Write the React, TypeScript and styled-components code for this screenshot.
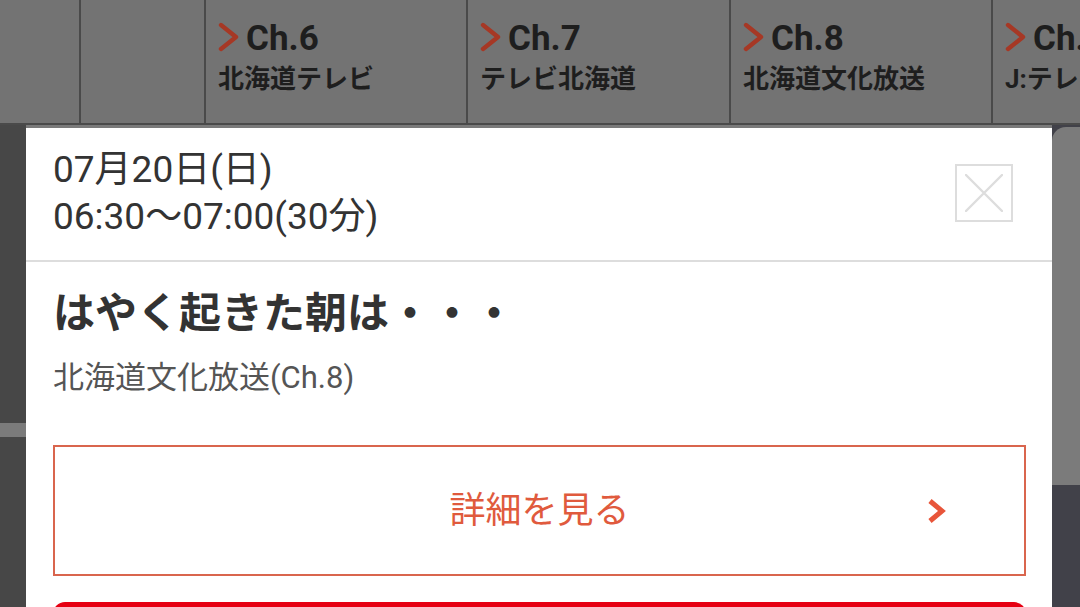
import React from "react";
import styled, { createGlobalStyle } from "styled-components";

const Global = createGlobalStyle`
  html, body {
    margin: 0;
    padding: 0;
    width: 1080px;
    height: 607px;
    overflow: hidden;
    background: #474747;
  }
  body {
    font-family: Roboto, "Noto Sans CJK JP", sans-serif;
  }
`;

const Page = styled.div`
  position: relative;
  width: 1080px;
  height: 607px;
  overflow: hidden;
  background: #474747;
  display: flex;
  flex-direction: column;
`;

const ChannelHeader = styled.div`
  display: flex;
  height: 123px;
  flex: none;
  background: #737373;
  border-bottom: 2px solid #4a4a4a;
`;

const HeaderCell = styled.div<{ $w: number }>`
  width: ${(p) => p.$w}px;
  flex: none;
  box-sizing: border-box;
  border-right: 2px solid #4a4a4a;
  padding: 20px 0 0 12px;
  overflow: hidden;
  white-space: nowrap;
`;

const ChRow = styled.div`
  display: flex;
  align-items: center;
  gap: 6px;
  height: 34px;
`;

const ChLabel = styled.span`
  font-family: Roboto, sans-serif;
  font-weight: 700;
  font-size: 35px;
  line-height: 34px;
  padding-top: 3px;
  color: #1e1e1e;
`;

const ChName = styled.div`
  margin-top: 10px;
  font-weight: 700;
  font-size: 26px;
  line-height: 30px;
  color: #1e1e1e;
`;

const BodyArea = styled.div`
  flex: 1;
  display: grid;
  grid-template-columns: 26px 1fr 28px;
`;

const LeftRail = styled.div`
  background: #474747;
  padding-top: 298px;
`;

const RailBand = styled.div`
  height: 14px;
  background: #7b7b7b;
`;

const Middle = styled.div`
  background: #7a7a7a;
`;

const RightRail = styled.div`
  background: #414149;
  padding-top: 2px;
`;

const RightCard = styled.div`
  height: 358px;
  background: #7b7b7b;
  border-top-left-radius: 14px;
`;

const Modal = styled.div`
  position: absolute;
  left: 26px;
  top: 128px;
  width: 1026px;
  bottom: -40px;
  background: #ffffff;
  display: flex;
  flex-direction: column;
`;

const ModalHead = styled.div`
  display: flex;
  align-items: center;
  justify-content: space-between;
  padding: 18px 39px 20px 27px;
  border-bottom: 2px solid #dddddd;
`;

const DateText = styled.div`
  font-size: 37px;
  line-height: 47px;
  color: #333333;
`;

const CloseButton = styled.button`
  width: 58px;
  height: 58px;
  box-sizing: border-box;
  border: 2px solid #dddddd;
  background: #ffffff;
  padding: 0;
  display: flex;
  align-items: center;
  justify-content: center;
  cursor: pointer;
`;

const ModalBody = styled.div`
  padding: 0 26px 0 27px;
  display: flex;
  flex-direction: column;
`;

const Title = styled.h2`
  margin: 27px 0 0;
  font-size: 42px;
  line-height: 50px;
  font-weight: 700;
  color: #333333;
  white-space: nowrap;
`;

const Station = styled.div`
  margin-top: 21px;
  font-size: 31px;
  line-height: 36px;
  color: #555555;
`;

const DetailButton = styled.button`
  margin-top: 49px;
  height: 131px;
  box-sizing: border-box;
  border: 2px solid #d9654e;
  background: #ffffff;
  display: grid;
  grid-template-columns: 1fr auto 1fr;
  align-items: center;
  padding: 0;
  font-family: Roboto, "Noto Sans CJK JP", sans-serif;
  cursor: pointer;
`;

const DetailText = styled.span`
  grid-column: 2;
  font-size: 36px;
  line-height: 40px;
  color: #e05a3d;
`;

const DetailChevron = styled.span`
  grid-column: 3;
  justify-self: end;
  margin-right: 78px;
  display: flex;
`;

const RedButton = styled.div`
  margin-top: 26px;
  height: 80px;
  border-radius: 12px;
  background: #e60012;
`;

const HeaderChevron = () => (
  <svg width="22" height="30" viewBox="0 0 22 30">
    <polyline
      points="3,3 18,15 3,27"
      fill="none"
      stroke="#a63825"
      strokeWidth="4.4"
      strokeLinecap="round"
      strokeLinejoin="round"
    />
  </svg>
);

const channels = [
  { ch: "Ch.6", name: "北海道テレビ", w: 262 },
  { ch: "Ch.7", name: "テレビ北海道", w: 263 },
  { ch: "Ch.8", name: "北海道文化放送", w: 262 },
  { ch: "Ch.9", name: "J:テレビ", w: 200 },
];

export default function App() {
  return (
    <>
      <Global />
      <Page>
        <ChannelHeader>
          <HeaderCell $w={81} />
          <HeaderCell $w={125} />
          {channels.map((c) => (
            <HeaderCell key={c.ch} $w={c.w}>
              <ChRow>
                <HeaderChevron />
                <ChLabel>{c.ch}</ChLabel>
              </ChRow>
              <ChName>{c.name}</ChName>
            </HeaderCell>
          ))}
        </ChannelHeader>
        <BodyArea>
          <LeftRail>
            <RailBand />
          </LeftRail>
          <Middle />
          <RightRail>
            <RightCard />
          </RightRail>
        </BodyArea>

        <Modal>
          <ModalHead>
            <DateText>
              07月20日(日)
              <br />
              06:30〜07:00(30分)
            </DateText>
            <CloseButton aria-label="閉じる">
              <svg width="38" height="38" viewBox="0 0 38 38">
                <path
                  d="M1 1 L37 37 M37 1 L1 37"
                  stroke="#dddddd"
                  strokeWidth="2.4"
                  strokeLinecap="round"
                />
              </svg>
            </CloseButton>
          </ModalHead>
          <ModalBody>
            <Title>はやく起きた朝は・・・</Title>
            <Station>北海道文化放送(Ch.8)</Station>
            <DetailButton>
              <DetailText>詳細を見る</DetailText>
              <DetailChevron>
                <svg width="20" height="26" viewBox="0 0 20 26">
                  <polyline
                    points="4,3 16,13 4,23"
                    fill="none"
                    stroke="#e8553a"
                    strokeWidth="5"
                    strokeLinejoin="miter"
                  />
                </svg>
              </DetailChevron>
            </DetailButton>
            <RedButton />
          </ModalBody>
        </Modal>
      </Page>
    </>
  );
}
